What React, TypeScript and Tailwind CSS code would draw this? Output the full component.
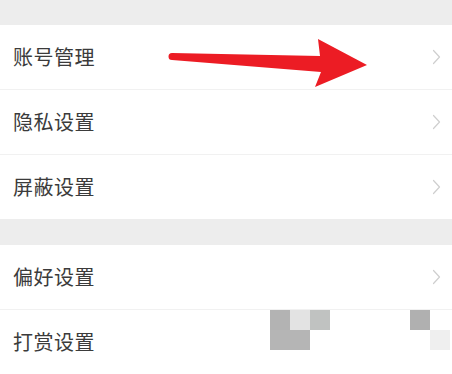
type Item = { label: string; arrow: boolean }

const groups: Item[][] = [
  [
    { label: '账号管理', arrow: true },
    { label: '隐私设置', arrow: true },
    { label: '屏蔽设置', arrow: true },
  ],
  [
    { label: '偏好设置', arrow: true },
    { label: '打赏设置', arrow: false },
  ],
]

// 马赛克格子，每格 20px，9 列 x 2 行
const mosaic = [
  'bg-[#b3b3b3]', 'bg-[#e3e3e3]', 'bg-[#c0c2c1]', '', '', '', '', 'bg-[#b0b0b0]', '',
  'bg-[#b5b5b5]', 'bg-[#b5b5b5]', '', '', '', '', '', '', 'bg-[#efefef]',
]

function Chevron() {
  return (
    <svg width="9" height="16" viewBox="0 0 9 16" fill="none">
      <path d="M1.5 1.5 L7.5 8 L1.5 14.5" stroke="#cfcfcf" strokeWidth="1.2" strokeLinecap="round" strokeLinejoin="round" />
    </svg>
  )
}

function Row({ item, last }: { item: Item; last: boolean }) {
  return (
    <div className={`flex items-center justify-between pl-[13px] pr-[11px] bg-white ${last ? 'h-16' : 'h-[65px] border-b border-[#f1f1f1]'}`}>
      <span className="text-[20px] text-[#3b3b3b] leading-none tracking-[0.5px]">{item.label}</span>
      {item.arrow && <Chevron />}
    </div>
  )
}

export default function App() {
  return (
    <div
      className="relative w-[452px] h-[374px] overflow-hidden bg-[#ededed] flex flex-col"
      style={{ fontFamily: '"Noto Sans CJK SC", "Noto Sans", sans-serif' }}
    >
      <div className="h-[25px] shrink-0" />
      <div className="flex flex-col">
        {groups[0].map((it, i) => (
          <Row key={it.label} item={it} last={i === groups[0].length - 1} />
        ))}
      </div>
      <div className="h-[26px] shrink-0" />
      <div className="flex flex-col">
        {groups[1].map((it, i) => (
          <Row key={it.label} item={it} last={i === groups[1].length - 1} />
        ))}
      </div>

      {/* 红色箭头标注 */}
      <svg className="absolute left-0 top-0 pointer-events-none" width="452" height="374">
        <path
          d="M172 53 L320 56 L318 39 L367 65 L315 87 L321 72 L172 60 A3.5 3.5 0 0 1 172 53 Z"
          fill="#ec1c24"
        />
      </svg>

      {/* 马赛克 */}
      <div className="absolute left-[270px] top-[310px] grid grid-cols-[repeat(9,20px)] grid-rows-[repeat(2,20px)]">
        {mosaic.map((c, i) => (
          <div key={i} className={c} />
        ))}
      </div>
    </div>
  )
}
